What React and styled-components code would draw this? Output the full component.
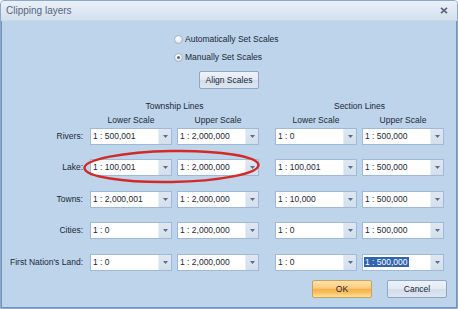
import React from 'react';
import styled, { createGlobalStyle } from 'styled-components';

const Global = createGlobalStyle`
  html, body { margin: 0; padding: 0; background: #ffffff; }
  body { font-family: "Liberation Sans", Arial, sans-serif; }
  #root { width: 458px; height: 309px; }
`;

const Window = styled.div`
  position: relative;
  box-sizing: border-box;
  width: 458px;
  height: 309px;
  display: flex;
  flex-direction: column;
  border: 1px solid #8ea8c8;
  border-radius: 4px 4px 0 0;
  background: #c4d8ee;
  overflow: hidden;
  font-family: "Liberation Sans", Arial, sans-serif;
  font-size: 8.5px;
  color: #1c2838;
`;

const TitleBar = styled.div`
  flex: none;
  height: 20px;
  box-sizing: border-box;
  display: flex;
  align-items: center;
  justify-content: space-between;
  padding: 0 9px 0 5px;
  background: linear-gradient(#e9f0f8, #d4e0ee);
  border-bottom: 1px solid #cad8e9;
`;

const Title = styled.span`
  font-size: 10px;
  color: #56667c;
`;

const Body = styled.div`
  flex: 1;
  display: flex;
  flex-direction: column;
  background: #bdd4eb;
  border: 1px solid #7094c0;
  border-top: none;
`;

const RadioGroup = styled.div`
  display: flex;
  flex-direction: column;
  gap: 5px;
  margin: 11.5px 0 0 172px;
`;

const RadioRow = styled.label`
  display: flex;
  align-items: center;
  gap: 2px;
  height: 13px;
  white-space: nowrap;
`;

const RadioCircle = styled.span`
  box-sizing: border-box;
  width: 9px;
  height: 9px;
  border-radius: 50%;
  border: 1px solid #aab4c0;
  background: radial-gradient(circle at 40% 35%, #ffffff, #d6dbe2);
  display: flex;
  align-items: center;
  justify-content: center;
  &::after {
    content: '';
    width: 3px;
    height: 3px;
    border-radius: 50%;
    background: ${p => (p.$checked ? '#5f6b7a' : 'transparent')};
  }
`;

const Button = styled.button`
  box-sizing: border-box;
  width: 60px;
  height: 18px;
  padding: 0;
  font-family: inherit;
  font-size: 8.5px;
  color: #1c2838;
  border: 1px solid ${p => (p.$primary ? '#c6a25e' : '#8fa7c5')};
  border-radius: 2px;
  background: ${p =>
    p.$primary
      ? 'linear-gradient(#fde2aa 0%, #fbcb80 45%, #f7b04a 52%, #f9c266 75%, #fde49d 100%)'
      : 'linear-gradient(#eef3f9 0%, #e3eaf3 48%, #d4deeb 52%, #dce5f0 100%)'};
`;

const AlignButton = styled(Button)`
  align-self: center;
  margin-top: 7.5px;
`;

const ScaleGrid = styled.div`
  display: grid;
  grid-template-columns: 83px 82px 82px 6px 82px 82px;
  grid-template-rows: 14px 15px repeat(4, 31.4px) 17px;
  column-gap: 5px;
  margin-top: 10px;
`;

const GroupTitle = styled.div`
  grid-column: ${p => p.$col};
  text-align: center;
  line-height: 14px;
`;

const SubHeader = styled.div`
  grid-column: ${p => p.$col};
  text-align: center;
  line-height: 15px;
`;

const RowLabel = styled.div`
  grid-column: 1;
  align-self: start;
  height: 17px;
  line-height: 17px;
  text-align: right;
  padding-right: 2px;
  white-space: nowrap;
`;

const Combo = styled.div`
  grid-column: ${p => p.$col};
  align-self: start;
  box-sizing: border-box;
  width: 82px;
  height: 17px;
  display: flex;
  background: #ffffff;
  border: 1px solid #9fb9d9;
`;

const ComboText = styled.div`
  flex: 1;
  padding-left: 2px;
  line-height: 15px;
  white-space: nowrap;
  overflow: hidden;
`;

const Selected = styled.span`
  background: #3263ad;
  color: #ffffff;
  margin-left: -1px;
  padding: 0 1px;
`;

const DropButton = styled.div`
  flex: none;
  width: 12px;
  background: linear-gradient(#dfe7f1, #d3dfec);
  border-left: 1px solid #e8eef6;
  display: flex;
  align-items: center;
  justify-content: center;
`;

const Footer = styled.div`
  display: flex;
  justify-content: flex-end;
  gap: 15px;
  margin-top: 9.4px;
  padding-right: 9px;
`;

const Annotation = styled.svg`
  position: absolute;
  left: 0;
  top: 0;
  pointer-events: none;
`;

const Arrow = () => (
  <svg width="5" height="3" viewBox="0 0 5 3">
    <path d="M0 0H5L2.5 3Z" fill="#56708f" />
  </svg>
);

const ScaleCombo = ({ col, value, selected }) => (
  <Combo $col={col}>
    <ComboText>{selected ? <Selected>{value}</Selected> : value}</ComboText>
    <DropButton>
      <Arrow />
    </DropButton>
  </Combo>
);

const rows = [
  { label: 'Rivers:', v: ['1 : 500,001', '1 : 2,000,000', '1 : 0', '1 : 500,000'] },
  { label: 'Lake:', v: ['1 : 100,001', '1 : 2,000,000', '1 : 100,001', '1 : 500,000'] },
  { label: 'Towns:', v: ['1 : 2,000,001', '1 : 2,000,000', '1 : 10,000', '1 : 500,000'] },
  { label: 'Cities:', v: ['1 : 0', '1 : 2,000,000', '1 : 0', '1 : 500,000'] },
  { label: "First Nation's Land:", v: ['1 : 0', '1 : 2,000,000', '1 : 0', '1 : 500,000'] },
];

const cols = [2, 3, 5, 6];

export default function App() {
  return (
    <>
      <Global />
      <Window>
        <TitleBar>
          <Title>Clipping layers</Title>
          <svg width="8" height="7" viewBox="0 0 8 7">
            <path d="M1 0.8L7 6.2M7 0.8L1 6.2" stroke="#5b667a" strokeWidth="1.7" />
          </svg>
        </TitleBar>
        <Body>
          <RadioGroup>
            <RadioRow>
              <RadioCircle />
              Automatically Set Scales
            </RadioRow>
            <RadioRow>
              <RadioCircle $checked />
              Manually Set Scales
            </RadioRow>
          </RadioGroup>
          <AlignButton>Align Scales</AlignButton>
          <ScaleGrid>
            <GroupTitle $col="2 / span 2">Township Lines</GroupTitle>
            <GroupTitle $col="5 / span 2">Section Lines</GroupTitle>
            <SubHeader $col="2">Lower Scale</SubHeader>
            <SubHeader $col="3">Upper Scale</SubHeader>
            <SubHeader $col="5">Lower Scale</SubHeader>
            <SubHeader $col="6">Upper Scale</SubHeader>
            {rows.map((r, ri) => (
              <React.Fragment key={r.label}>
                <RowLabel>{r.label}</RowLabel>
                {r.v.map((v, ci) => (
                  <ScaleCombo
                    key={ci}
                    col={cols[ci]}
                    value={v}
                    selected={ri === rows.length - 1 && ci === 3}
                  />
                ))}
              </React.Fragment>
            ))}
          </ScaleGrid>
          <Footer>
            <Button $primary>OK</Button>
            <Button>Cancel</Button>
          </Footer>
        </Body>
        <Annotation width="458" height="309" viewBox="0 0 458 309">
          <ellipse
            cx="170.5"
            cy="165.5"
            rx="87"
            ry="15.5"
            fill="none"
            stroke="#d42a26"
            strokeWidth="2.5"
            transform="rotate(-1 170.5 165.5)"
          />
        </Annotation>
      </Window>
    </>
  );
}
